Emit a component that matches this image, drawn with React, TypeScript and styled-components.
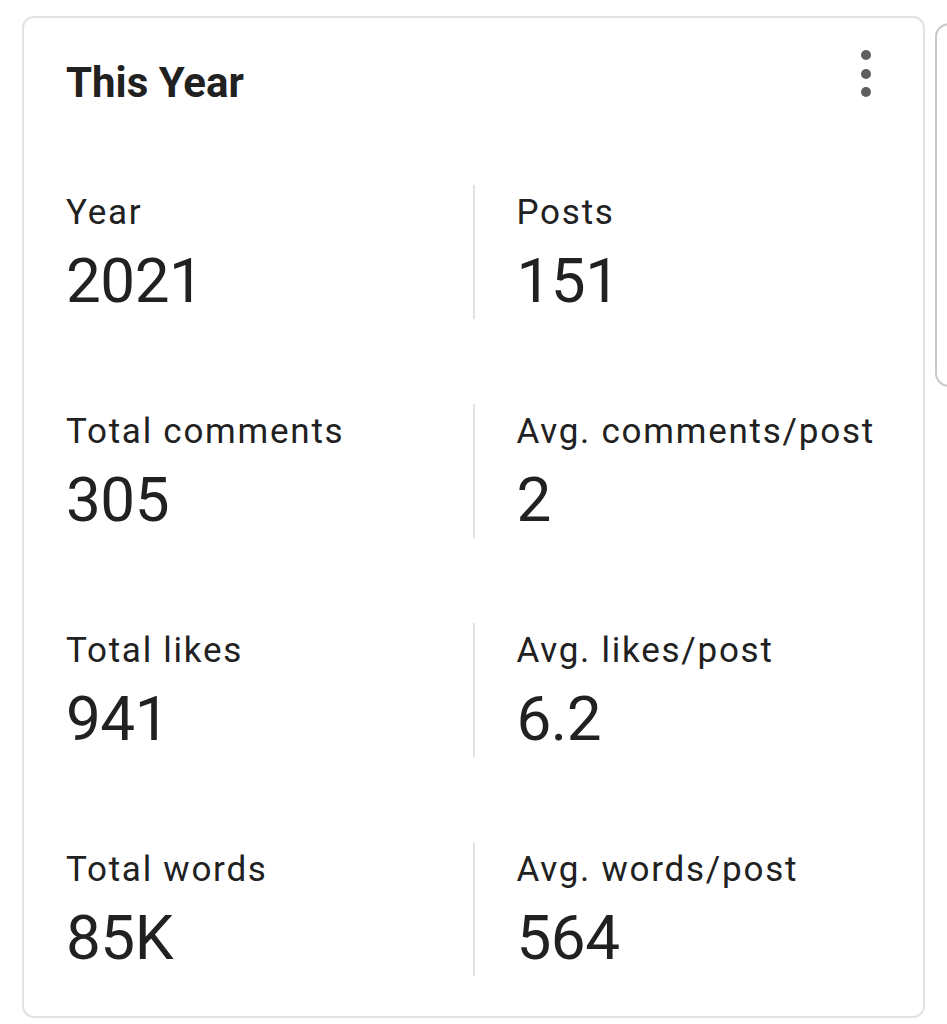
import React from "react";
import styled, { createGlobalStyle } from "styled-components";

const Global = createGlobalStyle`
  html, body { margin: 0; padding: 0; background: #ffffff; }
  body { font-family: Roboto, "Noto Sans", sans-serif; color: #212121; }
`;

const Strip = styled.div`
  display: flex;
  align-items: flex-start;
  gap: 10px;
  width: 947px;
  height: 1024px;
  overflow: hidden;
  padding: 16px 0 0 22px;
  box-sizing: border-box;
`;

const Card = styled.section`
  flex: 0 0 903px;
  box-sizing: border-box;
  border: 2px solid #e2e2e2;
  border-radius: 12px;
  background: #fff;
  padding: 44px 42px 40px 42px;
  display: flex;
  flex-direction: column;
  gap: 81px;
`;

const PeekCard = styled.div`
  flex: 0 0 400px;
  height: 364px;
  margin-top: 7px;
  box-sizing: border-box;
  border: 2px solid #c8c8c8;
  border-radius: 14px;
  background: #fff;
`;

const Header = styled.header`
  display: flex;
  justify-content: space-between;
  align-items: flex-start;
`;

const Title = styled.h2`
  margin: 0;
  font-size: 42px;
  line-height: 42px;
  font-weight: 700;
  color: #212121;
`;

const MenuButton = styled.button`
  border: 0;
  background: none;
  padding: 0;
  margin: -12px 10px 0 0;
  display: flex;
  flex-direction: column;
  align-items: center;
  gap: 8.5px;
`;

const Dot = styled.span`
  width: 10px;
  height: 10px;
  border-radius: 50%;
  background: #5f5f5f;
`;

const Grid = styled.div`
  display: grid;
  grid-template-columns: 1fr 1fr;
  row-gap: 85px;
`;

const Cell = styled.div<{ $right?: boolean }>`
  display: flex;
  flex-direction: column;
  gap: 20px;
  padding: 10px 0 7px ${(p) => (p.$right ? "42px" : "0")};
  border-left: ${(p) => (p.$right ? "2px solid #e3e3e3" : "none")};
  margin-left: ${(p) => (p.$right ? "-1px" : "0")};
`;

const Label = styled.div`
  font-size: 35px;
  line-height: 35px;
  letter-spacing: 1.75px;
  color: #212121;
  white-space: nowrap;
`;

const Value = styled.div`
  font-size: 62px;
  line-height: 62px;
  letter-spacing: -0.5px;
  color: #212121;
`;

const stats: [string, string][] = [
  ["Year", "2021"],
  ["Posts", "151"],
  ["Total comments", "305"],
  ["Avg. comments/post", "2"],
  ["Total likes", "941"],
  ["Avg. likes/post", "6.2"],
  ["Total words", "85K"],
  ["Avg. words/post", "564"],
];

export default function App() {
  return (
    <>
      <Global />
      <Strip>
        <Card>
          <Header>
            <Title>This Year</Title>
            <MenuButton aria-label="More options">
              <Dot />
              <Dot />
              <Dot />
            </MenuButton>
          </Header>
          <Grid>
            {stats.map(([label, value], i) => (
              <Cell key={label} $right={i % 2 === 1}>
                <Label>{label}</Label>
                <Value>{value}</Value>
              </Cell>
            ))}
          </Grid>
        </Card>
        <PeekCard />
      </Strip>
    </>
  );
}
